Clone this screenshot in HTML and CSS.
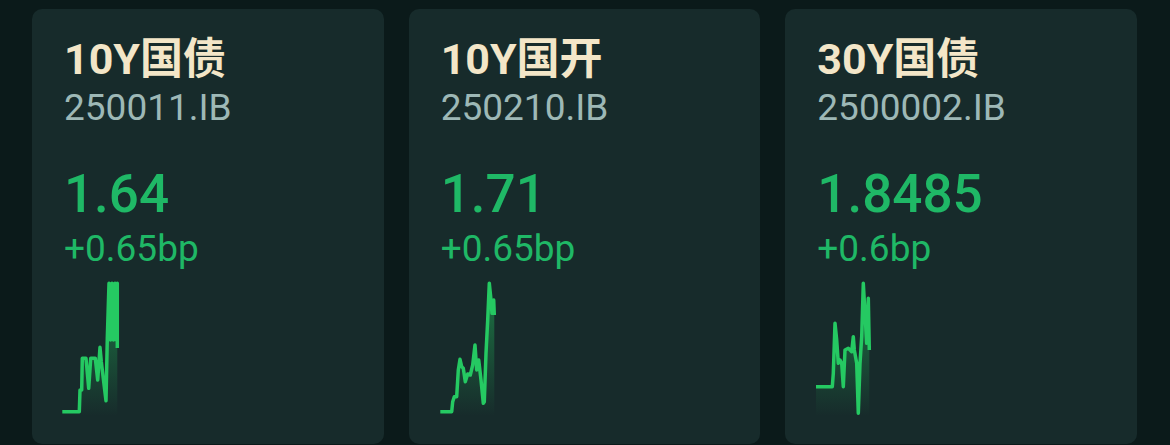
FILE: index.html
```html
<!DOCTYPE html>
<html lang="zh-CN">
<head>
    <meta charset="UTF-8">
    <meta name="viewport" content="width=device-width, initial-scale=1.0">
    <title>Bond Yields</title>
    <link rel="stylesheet" href="styles.css">
</head>
<body>
    <div class="cards">
        <div class="card">
            <div class="name">10Y国债</div>
            <div class="code">250011.IB</div>
            <div class="yield">1.64</div>
            <div class="change">+0.65bp</div>
            <svg class="spark" width="60" height="136" viewBox="0 0 60 136">
                <defs>
                    <linearGradient id="fill1" x1="0" y1="0" x2="0" y2="1">
                        <stop offset="0" stop-color="#22c55e" stop-opacity="0.5"/>
                        <stop offset="1" stop-color="#22c55e" stop-opacity="0"/>
                    </linearGradient>
                </defs>
                <polygon fill="url(#fill1)" points="2.3,131.7 19.3,131.7 20,110 21.7,110 22.3,78.3 26,78.3 28.7,108.3 30.7,78.3 35.3,78.3 37.7,100 40,67.3 41.3,81.7 46,120.7 47.3,58.3 49,3.3 57.3,3.3 57.3,136 2.3,136"/>
                <polyline class="line" points="2.3,131.7 19.3,131.7 20,110 21.7,110 22.3,78.3 26,78.3 28.7,108.3 30.7,78.3 35.3,78.3 37.7,100 40,67.3 41.3,81.7 46,120.7 47.3,58.3 49,3.3 50.5,60 52,3.3 53.5,60 55,3.3 56.5,60 57.3,3.3 57.3,68"/>
            </svg>
        </div>
        <div class="card">
            <div class="name">10Y国开</div>
            <div class="code">250210.IB</div>
            <div class="yield">1.71</div>
            <div class="change">+0.65bp</div>
            <svg class="spark" width="60" height="136" viewBox="0 0 60 136">
                <defs>
                    <linearGradient id="fill2" x1="0" y1="0" x2="0" y2="1">
                        <stop offset="0" stop-color="#22c55e" stop-opacity="0.5"/>
                        <stop offset="1" stop-color="#22c55e" stop-opacity="0"/>
                    </linearGradient>
                </defs>
                <polygon fill="url(#fill2)" points="3.3,131.7 14.7,131.7 15.7,121.7 17.3,116.7 19.7,116.7 21.3,90 23,79.3 24.7,86.7 26.3,88.3 28.3,101.7 30.7,94 33.3,95 35.7,85 38,65 39.7,90 41.7,80 44,100 46.3,123.3 47.3,121.7 49,73.3 50.7,40 52.3,3.3 54,20 55,33.3 56.7,20 57.3,35 57.3,136 3.3,136"/>
                <polyline class="line" points="3.3,131.7 14.7,131.7 15.7,121.7 17.3,116.7 19.7,116.7 21.3,90 23,79.3 24.7,86.7 26.3,88.3 28.3,101.7 30.7,94 33.3,95 35.7,85 38,65 39.7,90 41.7,80 44,100 46.3,123.3 47.3,121.7 49,73.3 50.7,40 52.3,3.3 54,20 55,33.3 56.7,20 57.3,35"/>
            </svg>
        </div>
        <div class="card">
            <div class="name">30Y国债</div>
            <div class="code">2500002.IB</div>
            <div class="yield">1.8485</div>
            <div class="change">+0.6bp</div>
            <svg class="spark" width="60" height="136" viewBox="0 0 60 136">
                <defs>
                    <linearGradient id="fill3" x1="0" y1="0" x2="0" y2="1">
                        <stop offset="0" stop-color="#22c55e" stop-opacity="0.5"/>
                        <stop offset="1" stop-color="#22c55e" stop-opacity="0"/>
                    </linearGradient>
                </defs>
                <polygon fill="url(#fill3)" points="3,106.7 19.3,106.7 20.3,93.3 22,43.3 23.7,60 25.3,83.3 27,80 28.7,83.3 30.3,106.7 32,70 35.3,68.3 37,70 38.7,71.7 40.3,56.7 41.3,70 43.7,83.3 45.3,133.3 47,83.3 48.7,56.7 50.3,3.3 52,33.3 53.7,63.3 55.3,18.3 56.3,70 56.3,136 3,136"/>
                <polyline class="line" points="3,106.7 19.3,106.7 20.3,93.3 22,43.3 23.7,60 25.3,83.3 27,80 28.7,83.3 30.3,106.7 32,70 35.3,68.3 37,70 38.7,71.7 40.3,56.7 41.3,70 43.7,83.3 45.3,133.3 47,83.3 48.7,56.7 50.3,3.3 52,33.3 53.7,63.3 55.3,18.3 56.3,70"/>
            </svg>
        </div>
    </div>
</body>
</html>
```

FILE: styles.css
```css
body {
    margin: 0;
    padding: 0;
    background-color: #0b1a1a;
    font-family: Roboto, "Noto Sans CJK SC", sans-serif;
    overflow: hidden;
}
.cards {
    display: grid;
    grid-template-columns: repeat(3, 1fr);
    gap: 25px;
    padding: 9px 33px 0 32px;
}
.card {
    height: 435px;
    box-sizing: border-box;
    background: #172b2b;
    border-radius: 10px;
    padding: 26px 32px 0 32px;
    display: flex;
    flex-direction: column;
}
.name {
    font-size: 43px;
    font-weight: bold;
    line-height: 48px;
    color: #f3e6c8;
}
.code {
    font-size: 37px;
    line-height: 50px;
    color: #9db8b6;
}
.yield {
    margin-top: 31px;
    font-size: 53px;
    font-weight: 500;
    line-height: 60px;
    color: #1fb866;
}
.change {
    margin-top: 3px;
    font-size: 37px;
    line-height: 44px;
    color: #1fb866;
}
.spark {
    display: block;
    margin: 9px 0 0 -4px;
}
.spark .line {
    fill: none;
    stroke: #25c962;
    stroke-width: 3.5;
    stroke-linejoin: round;
}
```
